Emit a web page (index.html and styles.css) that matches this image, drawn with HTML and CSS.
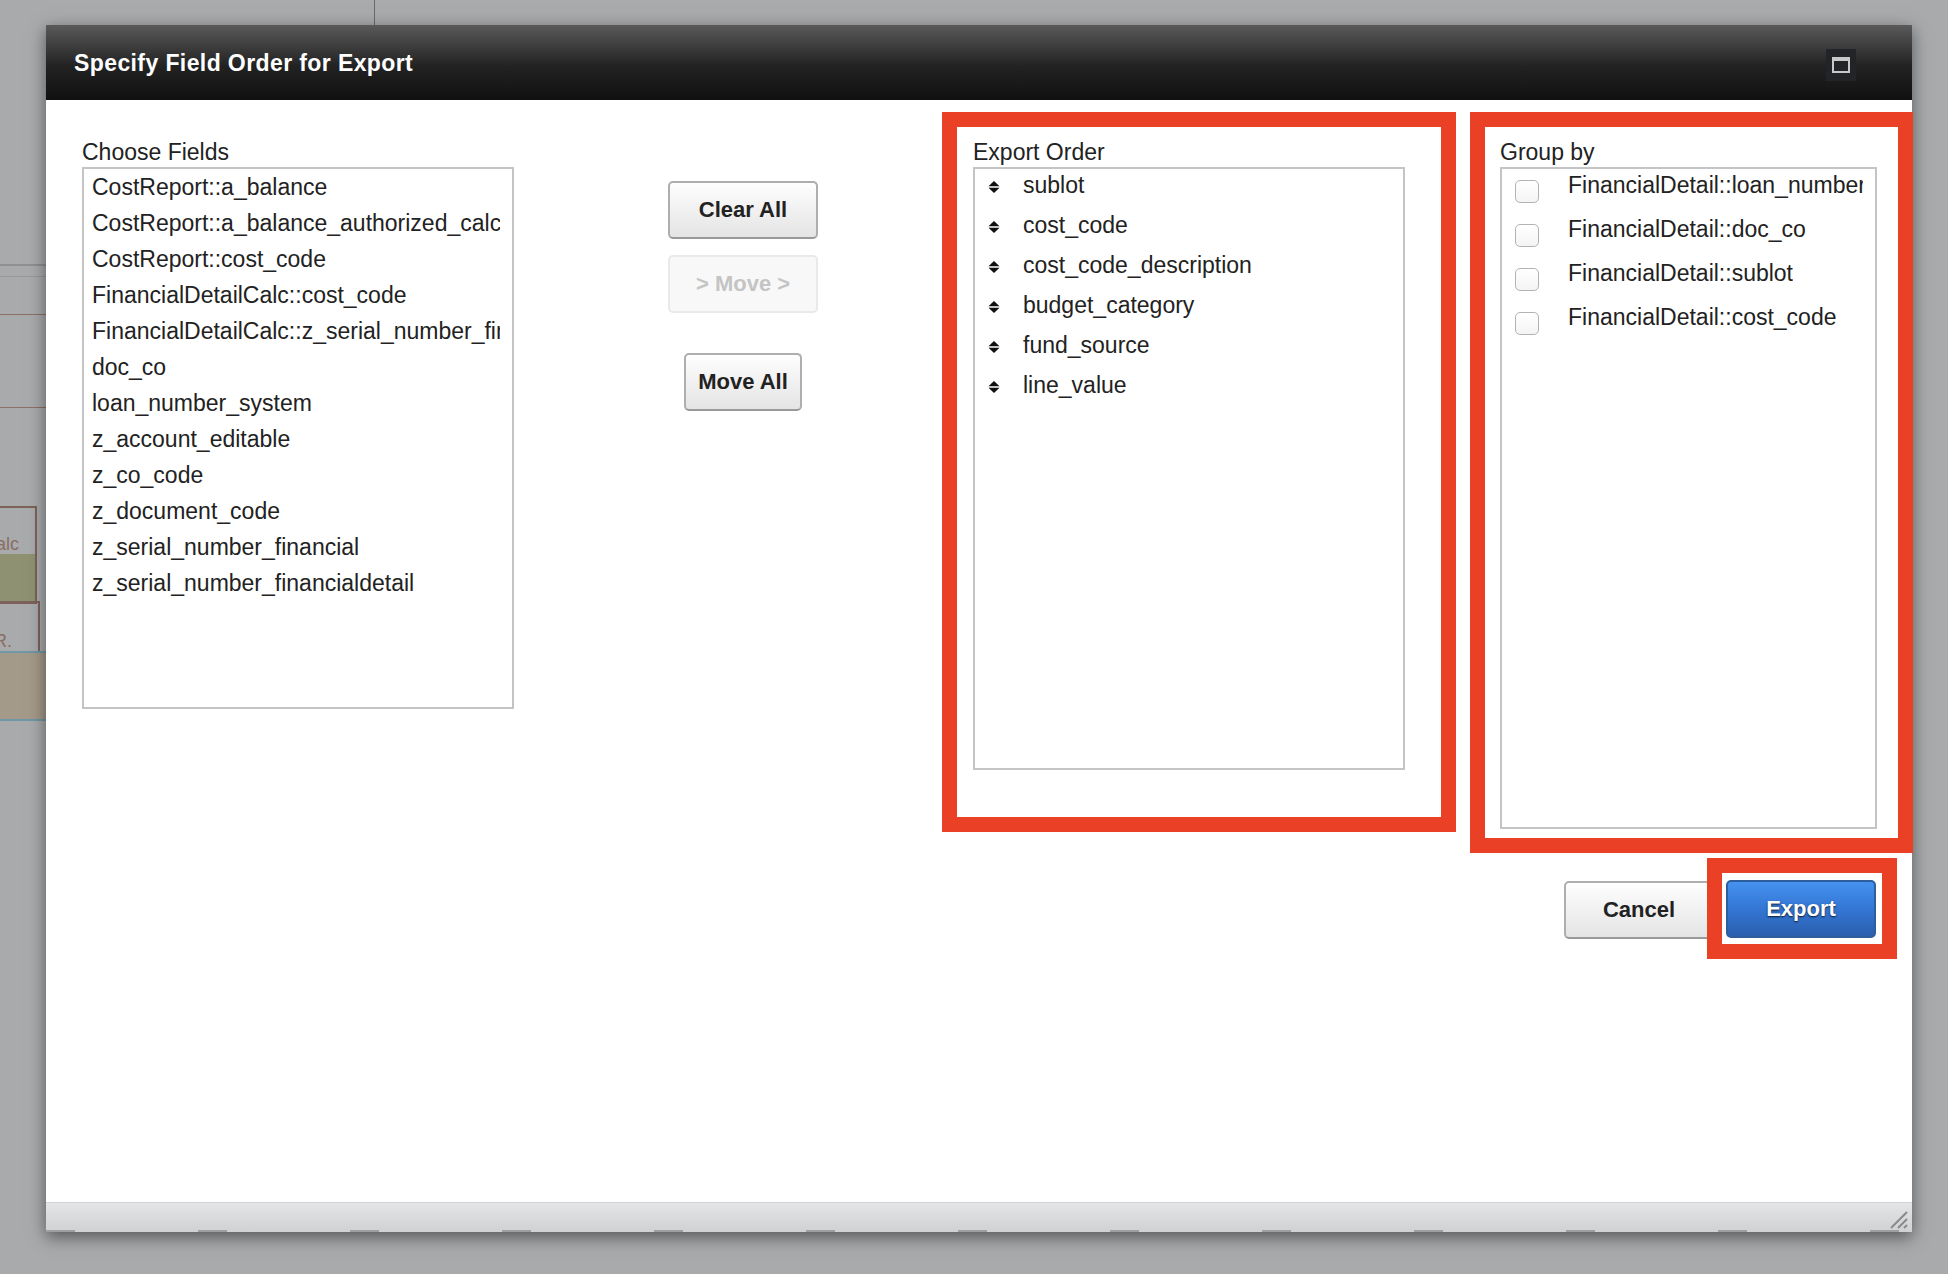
FILE: index.html
```html
<!DOCTYPE html>
<html lang="en">
<head>
    <meta charset="UTF-8">
    <title>Specify Field Order for Export</title>
    <link rel="stylesheet" href="styles.css">
</head>
<body>

    <!-- report layout that sits behind the modal -->
    <div class="backdrop">
        <div class="bd-vline"></div>
        <div class="bd-line bd-gray1"></div>
        <div class="bd-line bd-gray2"></div>
        <div class="bd-line bd-brown1"></div>
        <div class="bd-line bd-brown2"></div>
        <div class="bd-cell bd-cell-calc"><span>alc</span></div>
        <div class="bd-fill bd-green"></div>
        <div class="bd-cell bd-cell-r"><span>R.</span></div>
        <div class="bd-fill bd-tan"></div>
        <div class="bd-line bd-blue"></div>
    </div>

    <div class="dialog">
        <div class="dialog-title">
            <span class="dialog-caption">Specify Field Order for Export</span>
            <button class="title-btn" title="Maximize">
                <svg width="18" height="16" viewBox="0 0 18 16"><path fill-rule="evenodd" fill="#c9c9c9" d="M0 0H18V16H0Z M2 4V14H16V4Z"/></svg>
            </button>
        </div>

        <div class="dialog-body">
            <div class="panels">
                <!-- available fields -->
                <div class="choose">
                    <div class="section-label">Choose Fields</div>
                    <ul class="field-list choose-list">
                        <li>CostReport::a_balance</li>
                        <li>CostReport::a_balance_authorized_calc</li>
                        <li>CostReport::cost_code</li>
                        <li>FinancialDetailCalc::cost_code</li>
                        <li>FinancialDetailCalc::z_serial_number_financial</li>
                        <li>doc_co</li>
                        <li>loan_number_system</li>
                        <li>z_account_editable</li>
                        <li>z_co_code</li>
                        <li>z_document_code</li>
                        <li>z_serial_number_financial</li>
                        <li>z_serial_number_financialdetail</li>
                    </ul>
                </div>

                <div class="mover">
                    <button class="btn btn-wide">Clear All</button>
                    <button class="btn btn-wide" disabled>&gt; Move &gt;</button>
                    <button class="btn btn-narrow">Move All</button>
                </div>

                <div class="highlight export-box">
                    <div class="section-label">Export Order</div>
                    <ul class="field-list order-list">
                        <li><svg class="drag" width="12" height="12" viewBox="0 0 12 12"><path d="M6 0L11.5 5.3H0.5Z M0.5 6.7H11.5L6 12Z"/></svg><span>sublot</span></li>
                        <li><svg class="drag" width="12" height="12" viewBox="0 0 12 12"><path d="M6 0L11.5 5.3H0.5Z M0.5 6.7H11.5L6 12Z"/></svg><span>cost_code</span></li>
                        <li><svg class="drag" width="12" height="12" viewBox="0 0 12 12"><path d="M6 0L11.5 5.3H0.5Z M0.5 6.7H11.5L6 12Z"/></svg><span>cost_code_description</span></li>
                        <li><svg class="drag" width="12" height="12" viewBox="0 0 12 12"><path d="M6 0L11.5 5.3H0.5Z M0.5 6.7H11.5L6 12Z"/></svg><span>budget_category</span></li>
                        <li><svg class="drag" width="12" height="12" viewBox="0 0 12 12"><path d="M6 0L11.5 5.3H0.5Z M0.5 6.7H11.5L6 12Z"/></svg><span>fund_source</span></li>
                        <li><svg class="drag" width="12" height="12" viewBox="0 0 12 12"><path d="M6 0L11.5 5.3H0.5Z M0.5 6.7H11.5L6 12Z"/></svg><span>line_value</span></li>
                    </ul>
                </div>

                <div class="highlight group-box">
                    <div class="section-label">Group by</div>
                    <ul class="field-list group-list">
                        <li><span class="check"></span><span class="group-name">FinancialDetail::loan_number_system</span></li>
                        <li><span class="check"></span><span class="group-name">FinancialDetail::doc_co</span></li>
                        <li><span class="check"></span><span class="group-name">FinancialDetail::sublot</span></li>
                        <li><span class="check"></span><span class="group-name">FinancialDetail::cost_code</span></li>
                    </ul>
                </div>
            </div>

            <div class="actions">
                <button class="btn btn-cancel">Cancel</button>
                <div class="highlight export-wrap">
                    <button class="btn btn-primary">Export</button>
                </div>
            </div>
        </div>

        <div class="dialog-foot">
            <svg class="resize" width="22" height="22" viewBox="0 0 22 22">
                <path d="M4 21L20 5 M11 21L20 12 M17 21L20 18" stroke="#8a8a8a" stroke-width="2"/>
            </svg>
        </div>
    </div>

</body>
</html>
```

FILE: styles.css
```css
body {
    margin: 0;
    min-height: 1274px;
    background-color: #a9aaac;
    font-family: 'Liberation Sans', Arial, sans-serif;
    color: #222;
    overflow: hidden;
}

/* ---- page behind the overlay ---- */
.backdrop {
    position: absolute;
    top: 0;
    left: 0;
    width: 100%;
    height: 100%;
}

.bd-vline {
    position: absolute;
    left: 374px;
    top: 0;
    width: 1px;
    height: 26px;
    background-color: #6a6a6c;
}

.bd-line {
    position: absolute;
    left: 0;
    width: 50px;
    height: 2px;
}

.bd-gray1 { top: 264px; background-color: #8f9092; }
.bd-gray2 { top: 276px; background-color: #97989a; height: 1px; }
.bd-brown1 { top: 314px; background-color: #8d7066; height: 1px; }
.bd-brown2 { top: 407px; background-color: #8d7066; height: 1px; }
.bd-blue { top: 719px; background-color: #6f97a6; }

.bd-cell {
    position: absolute;
    left: 0;
    border: 2px solid #7d6259;
    border-left: none;
    color: #8a6e64;
    font-size: 18px;
}

.bd-cell-calc {
    top: 506px;
    width: 35px;
    height: 94px;
}

.bd-cell-calc span {
    display: block;
    margin-top: 26px;
    margin-left: -4px;
}

.bd-cell-r {
    top: 601px;
    width: 38px;
    height: 94px;
}

.bd-cell-r span {
    display: block;
    margin-top: 28px;
    margin-left: -6px;
}

.bd-fill {
    position: absolute;
    left: 0;
}

.bd-green {
    top: 554px;
    width: 35px;
    height: 47px;
    background-color: #8e9272;
}

.bd-tan {
    top: 651px;
    width: 50px;
    height: 68px;
    background-color: #a49a89;
    border-top: 2px solid #6f97a6;
}

/* ---- dialog ---- */
.dialog {
    position: relative;
    z-index: 1;
    width: 1866px;
    margin: 25px 0 0 46px;
    background-color: #fff;
    box-shadow: 0 5px 16px rgba(0, 0, 0, 0.5);
}

.dialog-title {
    height: 75px;
    display: flex;
    align-items: center;
    justify-content: space-between;
    padding: 0 56px 0 28px;
    background: linear-gradient(#5a5a5a, #222 55%, #111);
}

.dialog-caption {
    color: #fff;
    font-weight: bold;
    font-size: 23px;
    letter-spacing: 0.4px;
    margin-top: 2px;
}

.title-btn {
    width: 30px;
    height: 32px;
    margin-top: 4px;
    padding: 0;
    border: none;
    background-color: #222427;
    display: flex;
    align-items: center;
    justify-content: center;
}

.dialog-body {
    box-sizing: border-box;
    height: 1102px;
    padding: 12px 0 0 36px;
}

.panels {
    display: flex;
    align-items: flex-start;
}

.section-label {
    font-size: 23px;
    line-height: 26px;
    margin: 12px 0 2px;
}

.field-list {
    list-style: none;
    margin: 0;
    box-sizing: border-box;
    border: 2px solid #c4c4c4;
    font-size: 23px;
}

.field-list li {
    white-space: nowrap;
    overflow: hidden;
}

.choose {
    width: 432px;
    margin-top: 15px;
}

.choose-list {
    height: 542px;
    padding: 0 12px 0 8px;
}

.choose-list li {
    line-height: 36px;
}

.mover {
    width: 150px;
    margin: 69px 0 0 154px;
    display: flex;
    flex-direction: column;
    align-items: center;
}

/* ---- buttons ---- */
.btn {
    height: 58px;
    box-sizing: border-box;
    border: 2px solid #aeaeae;
    border-bottom-color: #999;
    border-radius: 5px;
    background: linear-gradient(#fefefe, #f1f1f1 50%, #e4e4e4);
    font-family: 'Liberation Sans', Arial, sans-serif;
    font-weight: bold;
    font-size: 22px;
    color: #222;
    padding: 0;
    cursor: pointer;
}

.btn:disabled {
    border-color: #e9e9e9;
    background: #f8f8f8;
    color: #c4c4c4;
    cursor: default;
}

.btn-wide {
    width: 150px;
}

.btn-wide + .btn-wide {
    margin-top: 16px;
}

.btn-narrow {
    width: 118px;
    margin-top: 40px;
}

/* red outline marking a section */
.highlight {
    border: 15px solid #ea4026;
}

.export-box {
    margin-left: 124px;
    padding: 0 36px 47px 16px;
}

.order-list {
    width: 432px;
    height: 603px;
    padding: 0 12px 0 13px;
}

.order-list li {
    display: flex;
    align-items: flex-start;
    line-height: 32px;
    margin-bottom: 8px;
}

.drag {
    flex: none;
    margin: 12px 23px 0 0;
    fill: #111;
}

.group-box {
    margin-left: 14px;
    padding: 0 21px 9px 15px;
}

.group-list {
    width: 377px;
    height: 662px;
    padding: 0 12px 0 13px;
}

.group-list li {
    display: flex;
    align-items: flex-start;
    height: 32px;
    line-height: 32px;
    margin-bottom: 12px;
    overflow: visible;
}

.check {
    flex: none;
    width: 24px;
    height: 23px;
    box-sizing: border-box;
    margin: 11px 29px 0 0;
    border: 1px solid #b3b3b3;
    border-radius: 5px;
    background: linear-gradient(#fff, #f4f4f4);
}

.group-name {
    min-width: 0;
    overflow: hidden;
}

.actions {
    display: flex;
    justify-content: flex-end;
    align-items: flex-start;
    margin-top: 5px;
    padding-right: 15px;
}

.btn-cancel {
    width: 150px;
    margin-top: 23px;
}

.export-wrap {
    margin-left: -7px;
    padding: 7px 6px 6px 4px;
    background-color: #fff;
    background-clip: padding-box;
}

.btn-primary {
    display: block;
    width: 150px;
    border: 2px solid #2f5e9c;
    background: linear-gradient(#4592ee, #3476d4 50%, #2a5fae);
    color: #fff;
    text-shadow: 0 1px 2px rgba(0, 0, 0, 0.8);
}

/* ---- bottom resize bar ---- */
.dialog-foot {
    position: relative;
    box-sizing: border-box;
    height: 30px;
    border-top: 1px solid #d2d3d5;
    background: linear-gradient(#e4e5e7, #d0d1d3);
}

.dialog-foot::after {
    content: "";
    position: absolute;
    left: 0;
    right: 0;
    bottom: 0;
    height: 2px;
    background: repeating-linear-gradient(to right, #9e9fa1 0 29px, transparent 29px 152px);
}

.resize {
    position: absolute;
    right: 3px;
    bottom: 3px;
}
```
